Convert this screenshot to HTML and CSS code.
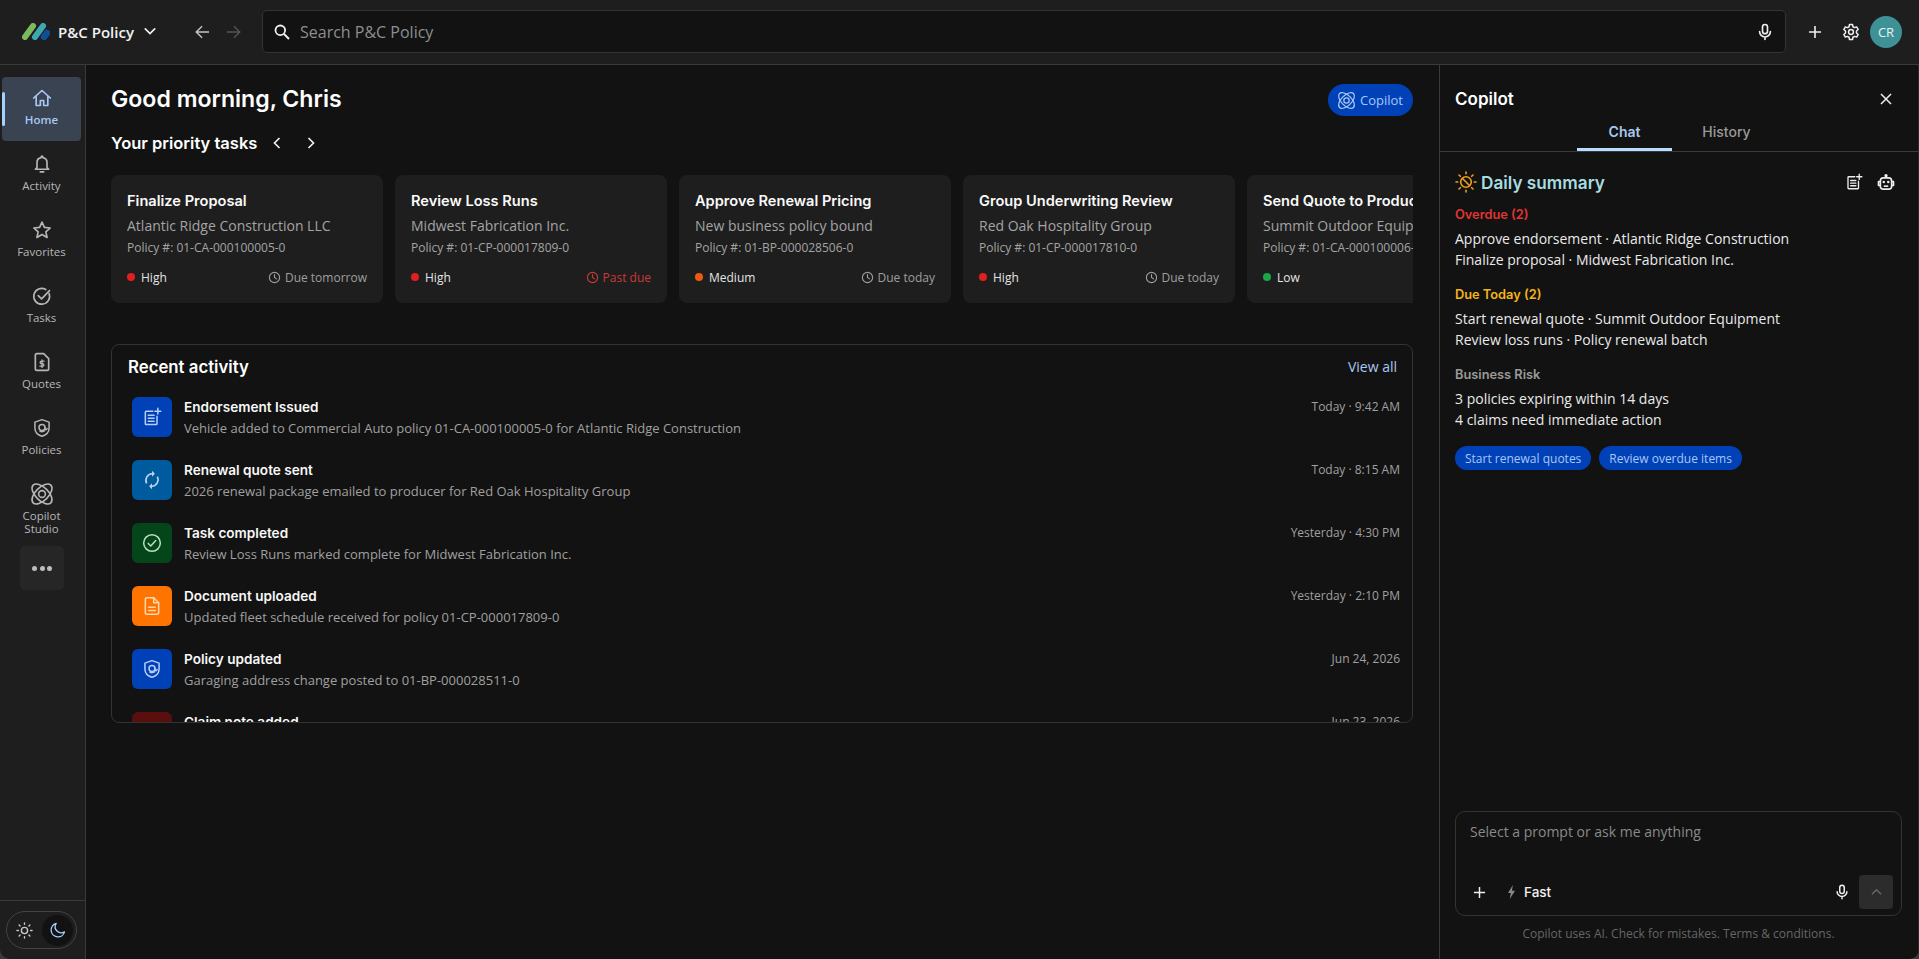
FILE: index.html
```html
<!DOCTYPE html>
<html lang="en">
<head>
<meta charset="utf-8">
<title>P&amp;C Policy</title>
<link rel="stylesheet" href="styles.css">
</head>
<body>
<svg class="defs" width="0" height="0" aria-hidden="true">
  <defs>
    <symbol id="i-atom" viewBox="0 0 24 24">
      <g fill="none" stroke="currentColor" stroke-width="1.6">
        <ellipse cx="12" cy="12" rx="12.5" ry="6.5" transform="rotate(45 12 12)"/>
        <ellipse cx="12" cy="12" rx="12.5" ry="6.5" transform="rotate(-45 12 12)"/>
        <circle cx="12" cy="12" r="3.4"/>
      </g>
    </symbol>
    <symbol id="i-clock" viewBox="0 0 14 14">
      <g fill="none" stroke="currentColor" stroke-width="1.2" stroke-linecap="round">
        <circle cx="7" cy="7" r="5.5"/>
        <path d="M7 3.8V7l2.2 1.5"/>
      </g>
    </symbol>
    <symbol id="i-mic" viewBox="0 0 24 24">
      <g fill="none" stroke="currentColor" stroke-width="2" stroke-linecap="round">
        <rect x="9" y="3" width="6" height="11" rx="3"/>
        <path d="M5.5 11.5a6.5 6.5 0 0 0 13 0M12 18v3"/>
      </g>
    </symbol>
    <symbol id="i-note" viewBox="0 0 24 24">
      <g fill="none" stroke="currentColor" stroke-width="1.8" stroke-linecap="round">
        <path d="M13 5H5a1 1 0 0 0-1 1v14a1 1 0 0 0 1 1h12a1 1 0 0 0 1-1v-9"/>
        <path d="M7.5 10h7M7.5 13.5h7M7.5 17h7M19 1.5v7M15.5 5h7"/>
      </g>
    </symbol>
    <symbol id="i-shield" viewBox="0 0 24 24">
      <g fill="none" stroke="currentColor" stroke-width="1.8" stroke-linecap="round" stroke-linejoin="round">
        <path d="M12 2l8.5 3v7c0 5-3.6 8.4-8.5 10-4.9-1.6-8.5-5-8.5-10V5z"/>
        <circle cx="12" cy="11.5" r="3.6"/>
        <path d="M15.6 11.5v1.2c0 1.8 2 1.8 2.4 0M15 15.5c-1.8 1-4 1-5.5.3"/>
      </g>
    </symbol>
  </defs>
</svg>
<div class="app">
  <header class="topbar">
    <svg class="logo" viewBox="0 0 28 17" aria-hidden="true">
      <path d="M22 14L25 10" stroke="#0f4f94" stroke-width="6.5" stroke-linecap="round"/>
      <path d="M3 14L11 3" stroke="#7cb95e" stroke-width="6" stroke-linecap="round"/>
      <path d="M13 14L21 3" stroke="#3fa7ad" stroke-width="6" stroke-linecap="round"/>
    </svg>
    <span class="app-name">P&amp;C Policy</span>
    <svg class="top-chev" viewBox="0 0 14 9" aria-hidden="true"><path d="M1.5 1.5L7 7l5.5-5.5" fill="none" stroke="currentColor" stroke-width="2" stroke-linecap="round"/></svg>
    <nav class="history">
      <svg class="nav-arrow" viewBox="0 0 16 16" aria-hidden="true"><path d="M15 8H1.5M7.5 1.8L1.3 8l6.2 6.2" fill="none" stroke="currentColor" stroke-width="1.5"/></svg>
      <svg class="nav-arrow off" viewBox="0 0 16 16" aria-hidden="true"><path d="M1 8h13.5M8.5 1.8L14.7 8l-6.2 6.2" fill="none" stroke="currentColor" stroke-width="1.5"/></svg>
    </nav>
    <div class="search">
      <svg class="search-icon" viewBox="0 0 16 16" aria-hidden="true"><circle cx="6.3" cy="6.3" r="4.8" fill="none" stroke="currentColor" stroke-width="1.8"/><path d="M10 10l5 5" stroke="currentColor" stroke-width="2"/></svg>
      <span class="search-text">Search P&amp;C Policy</span>
      <svg class="mic"><use href="#i-mic"/></svg>
    </div>
    <svg class="top-plus" viewBox="0 0 14 14" aria-hidden="true"><path d="M7 1v12M1 7h12" stroke="currentColor" stroke-width="1.6"/></svg>
    <svg class="top-gear" viewBox="0 0 24 24" aria-hidden="true">
      <g fill="none" stroke="currentColor" stroke-width="2" stroke-linejoin="round">
        <path d="M10 2h4l.6 3 2.1 1.2 2.9-1 2 3.5-2.3 2v2.6l2.3 2-2 3.5-2.9-1-2.1 1.2-.6 3h-4l-.6-3-2.1-1.2-2.9 1-2-3.5 2.3-2v-2.6l-2.3-2 2-3.5 2.9 1L9.4 5z"/>
        <circle cx="12" cy="12" r="3.2"/>
      </g>
    </svg>
    <div class="avatar">CR</div>
  </header>

  <div class="body">
    <aside class="sidebar">
      <nav class="side-nav">
        <a class="side-item active">
          <svg class="side-icon" viewBox="0 0 24 24" aria-hidden="true"><g fill="none" stroke="currentColor" stroke-width="2" stroke-linejoin="round" stroke-linecap="round"><path d="M2 12L12 3l10 9M5 10v11h5v-6h4v6h5V10"/></g></svg>
          <span>Home</span>
        </a>
        <a class="side-item">
          <svg class="side-icon" viewBox="0 0 24 24" aria-hidden="true"><g fill="none" stroke="currentColor" stroke-width="2" stroke-linejoin="round" stroke-linecap="round"><path d="M12 2.5a1 1 0 0 1 1 1v.8a6 6 0 0 1 5 6v6l2 2H4l2-2v-6a6 6 0 0 1 5-6v-.8a1 1 0 0 1 1-1z"/><path d="M10 21.5h4"/></g></svg>
          <span>Activity</span>
        </a>
        <a class="side-item">
          <svg class="side-icon" viewBox="0 0 24 24" aria-hidden="true"><path d="M12 2.5l2.9 6.4 6.9.7-5.2 4.6 1.5 6.8-6.1-3.5-6.1 3.5 1.5-6.8-5.2-4.6 6.9-.7z" fill="none" stroke="currentColor" stroke-width="2" stroke-linejoin="round"/></svg>
          <span>Favorites</span>
        </a>
        <a class="side-item">
          <svg class="side-icon" viewBox="0 0 24 24" aria-hidden="true"><g fill="none" stroke="currentColor" stroke-width="2" stroke-linecap="round" stroke-linejoin="round"><path d="M20.5 9a9.5 9.5 0 1 1-4-4.8"/><path d="M7.5 11.5l4 4L21 5.5"/></g></svg>
          <span>Tasks</span>
        </a>
        <a class="side-item">
          <svg class="side-icon" viewBox="0 0 24 24" aria-hidden="true"><g fill="none" stroke="currentColor" stroke-width="2" stroke-linejoin="round" stroke-linecap="round"><path d="M6 2h8l6 6v12a2 2 0 0 1-2 2H6a2 2 0 0 1-2-2V4a2 2 0 0 1 2-2z"/><path d="M14.5 11h-3.2a1.5 1.5 0 0 0 0 3h1.4a1.5 1.5 0 0 1 0 3H9.5M12 9.5v9" stroke-width="1.6"/></g></svg>
          <span>Quotes</span>
        </a>
        <a class="side-item">
          <svg class="side-icon"><use href="#i-shield"/></svg>
          <span>Policies</span>
        </a>
        <a class="side-item">
          <svg class="side-icon big"><use href="#i-atom"/></svg>
          <span>Copilot<br>Studio</span>
        </a>
        <button class="more" aria-label="More"><i></i><i></i><i></i></button>
      </nav>
      <div class="theme-area">
        <div class="theme-toggle">
          <svg class="sun" viewBox="0 0 18 18" aria-hidden="true"><g fill="none" stroke="currentColor" stroke-width="1.5" stroke-linecap="round"><circle cx="9" cy="9" r="3.3"/><path d="M9 1v1.5M9 15.5V17M1 9h1.5M15.5 9H17M3.3 3.3l1 1M13.7 13.7l1 1M3.3 14.7l1-1M13.7 4.3l1-1"/></g></svg>
          <span class="moon-wrap">
            <svg class="moon" viewBox="0 0 16 16" aria-hidden="true"><path d="M6.2 1.5a6.800 6.800 0 1 0 8.300 8.300A6 6 0 0 1 6.200 1.500z" fill="none" stroke="currentColor" stroke-width="1.3" stroke-linejoin="round"/></svg>
          </span>
        </div>
      </div>
    </aside>

    <main class="main">
      <div class="greet-row">
        <h1 class="greet">Good morning, Chris</h1>
        <button class="copilot-pill"><svg class="pill-icon"><use href="#i-atom"/></svg>Copilot</button>
      </div>
      <div class="tasks-head">
        <h2 class="tasks-title">Your priority tasks</h2>
        <svg class="task-nav" viewBox="0 0 8 12" aria-hidden="true"><path d="M6.5 1L1.5 6l5 5" fill="none" stroke="currentColor" stroke-width="1.7"/></svg>
        <svg class="task-nav" viewBox="0 0 8 12" aria-hidden="true"><path d="M1.5 1l5 5-5 5" fill="none" stroke="currentColor" stroke-width="1.7"/></svg>
      </div>
      <div class="cards">
        <article class="card">
          <h3 class="card-title">Finalize Proposal</h3>
          <p class="card-sub">Atlantic Ridge Construction LLC</p>
          <p class="card-policy">Policy #: 01-CA-000100005-0</p>
          <div class="card-foot"><span class="prio"><i class="dot red"></i>High</span><span class="due"><svg class="clock"><use href="#i-clock"/></svg>Due tomorrow</span></div>
        </article>
        <article class="card">
          <h3 class="card-title">Review Loss Runs</h3>
          <p class="card-sub">Midwest Fabrication Inc.</p>
          <p class="card-policy">Policy #: 01-CP-000017809-0</p>
          <div class="card-foot"><span class="prio"><i class="dot red"></i>High</span><span class="due late"><svg class="clock"><use href="#i-clock"/></svg>Past due</span></div>
        </article>
        <article class="card">
          <h3 class="card-title">Approve Renewal Pricing</h3>
          <p class="card-sub">New business policy bound</p>
          <p class="card-policy">Policy #: 01-BP-000028506-0</p>
          <div class="card-foot"><span class="prio"><i class="dot orange"></i>Medium</span><span class="due"><svg class="clock"><use href="#i-clock"/></svg>Due today</span></div>
        </article>
        <article class="card">
          <h3 class="card-title">Group Underwriting Review</h3>
          <p class="card-sub">Red Oak Hospitality Group</p>
          <p class="card-policy">Policy #: 01-CP-000017810-0</p>
          <div class="card-foot"><span class="prio"><i class="dot red"></i>High</span><span class="due"><svg class="clock"><use href="#i-clock"/></svg>Due today</span></div>
        </article>
        <article class="card">
          <h3 class="card-title">Send Quote to Producer</h3>
          <p class="card-sub">Summit Outdoor Equipment</p>
          <p class="card-policy">Policy #: 01-CA-000100006-0</p>
          <div class="card-foot"><span class="prio"><i class="dot green"></i>Low</span><span class="due"><svg class="clock"><use href="#i-clock"/></svg>Due today</span></div>
        </article>
      </div>

      <section class="activity">
        <div class="activity-head">
          <h2 class="activity-title">Recent activity</h2>
          <a class="view-all">View all</a>
        </div>
        <div class="activity-list">
          <div class="row">
            <span class="row-icon blue"><svg class="row-svg"><use href="#i-note"/></svg></span>
            <div class="row-text"><div class="row-title">Endorsement Issued</div><div class="row-sub">Vehicle added to Commercial Auto policy 01-CA-000100005-0 for Atlantic Ridge Construction</div></div>
            <span class="row-time">Today · 9:42 AM</span>
          </div>
          <div class="row">
            <span class="row-icon steel"><svg class="row-svg" viewBox="0 0 24 24" aria-hidden="true"><g fill="none" stroke="currentColor" stroke-width="2"><path d="M5.5 16A8 8 0 0 1 12 4.5h1"/><path d="M18.5 8A8 8 0 0 1 12 19.5h-1"/><path d="M12 1l3.5 3.5L12 8zM12 16l-3.5 3.5L12 23z" fill="currentColor" stroke="none"/></g></svg></span>
            <div class="row-text"><div class="row-title">Renewal quote sent</div><div class="row-sub">2026 renewal package emailed to producer for Red Oak Hospitality Group</div></div>
            <span class="row-time">Today · 8:15 AM</span>
          </div>
          <div class="row">
            <span class="row-icon forest"><svg class="row-svg" viewBox="0 0 24 24" aria-hidden="true"><g fill="none" stroke="currentColor" stroke-width="1.8" stroke-linecap="round" stroke-linejoin="round"><circle cx="12" cy="12" r="10"/><path d="M7.5 12.5l3 3 6-6.5"/></g></svg></span>
            <div class="row-text"><div class="row-title">Task completed</div><div class="row-sub">Review Loss Runs marked complete for Midwest Fabrication Inc.</div></div>
            <span class="row-time">Yesterday · 4:30 PM</span>
          </div>
          <div class="row">
            <span class="row-icon amber"><svg class="row-svg" viewBox="0 0 24 24" aria-hidden="true"><g fill="none" stroke="currentColor" stroke-width="1.8" stroke-linejoin="round" stroke-linecap="round"><path d="M6 2h8l6 6v12a2 2 0 0 1-2 2H6a2 2 0 0 1-2-2V4a2 2 0 0 1 2-2z"/><path d="M14 2v6h6M8 13.5h8M8 17.5h8"/></g></svg></span>
            <div class="row-text"><div class="row-title">Document uploaded</div><div class="row-sub">Updated fleet schedule received for policy 01-CP-000017809-0</div></div>
            <span class="row-time">Yesterday · 2:10 PM</span>
          </div>
          <div class="row">
            <span class="row-icon blue"><svg class="row-svg"><use href="#i-shield"/></svg></span>
            <div class="row-text"><div class="row-title">Policy updated</div><div class="row-sub">Garaging address change posted to 01-BP-000028511-0</div></div>
            <span class="row-time">Jun 24, 2026</span>
          </div>
          <div class="row">
            <span class="row-icon maroon"></span>
            <div class="row-text"><div class="row-title">Claim note added</div><div class="row-sub">Adjuster note added to claim file</div></div>
            <span class="row-time">Jun 23, 2026</span>
          </div>
        </div>
      </section>
    </main>

    <aside class="panel">
      <div class="panel-head">
        <h2 class="panel-title">Copilot</h2>
        <svg class="panel-close" viewBox="0 0 12 12" aria-hidden="true"><path d="M1 1l10 10M11 1L1 11" stroke="currentColor" stroke-width="1.5"/></svg>
      </div>
      <div class="tabs">
        <span class="tab current">Chat</span>
        <span class="tab">History</span>
      </div>
      <div class="summary">
        <div class="summary-head">
          <svg class="sum-icon" viewBox="0 0 22 22" aria-hidden="true"><g fill="none" stroke="#f0a020" stroke-width="1.6" stroke-linecap="round"><circle cx="11" cy="11" r="5.3"/><path d="M11 1v1.8M11 19.2V21M1 11h1.8M19.2 11H21M4 4l1.3 1.3M16.7 16.7L18 18M4 18l1.3-1.3M16.7 5.3L18 4M7.5 7.5l7 7"/></g></svg>
          <h3 class="sum-title">Daily summary</h3>
          <svg class="sum-action"><use href="#i-note"/></svg>
          <svg class="sum-action" viewBox="0 0 24 24" aria-hidden="true"><g fill="none" stroke="currentColor" stroke-width="2.2" stroke-linejoin="round"><rect x="4.5" y="6.5" width="15" height="15" rx="4"/><path d="M12 6.5V3"/><path d="M4 11.5H2v5h2M20 11.5h2v5h-2"/><path d="M9 17.5h6"/></g><circle cx="9" cy="12" r="1.7" fill="currentColor"/><circle cx="15" cy="12" r="1.7" fill="currentColor"/><circle cx="12" cy="3.5" r="2.2" fill="currentColor"/></svg>
        </div>
        <h4 class="sum-label overdue">Overdue (2)</h4>
        <p class="sum-line">Approve endorsement · Atlantic Ridge Construction</p>
        <p class="sum-line">Finalize proposal · Midwest Fabrication Inc.</p>
        <h4 class="sum-label today">Due Today (2)</h4>
        <p class="sum-line">Start renewal quote · Summit Outdoor Equipment</p>
        <p class="sum-line">Review loss runs · Policy renewal batch</p>
        <h4 class="sum-label risk">Business Risk</h4>
        <p class="sum-line">3 policies expiring within 14 days</p>
        <p class="sum-line">4 claims need immediate action</p>
        <div class="chips">
          <button class="chip">Start renewal quotes</button>
          <button class="chip">Review overdue items</button>
        </div>
      </div>
      <div class="composer">
        <div class="prompt">Select a prompt or ask me anything</div>
        <div class="composer-bar">
          <svg class="comp-plus" viewBox="0 0 14 14" aria-hidden="true"><path d="M7 1v12M1 7h12" stroke="currentColor" stroke-width="1.6"/></svg>
          <svg class="bolt" viewBox="0 0 10 16" aria-hidden="true"><path d="M6.5 0L1 9h3.2L3 16l6-9.5H5.6z" fill="currentColor"/></svg>
          <span class="fast">Fast</span>
          <svg class="comp-mic"><use href="#i-mic"/></svg>
          <button class="send" aria-label="Send"><svg class="send-icon" viewBox="0 0 12 8" aria-hidden="true"><path d="M1 6.5l5-5 5 5" fill="none" stroke="currentColor" stroke-width="1.5"/></svg></button>
        </div>
      </div>
      <p class="disclaimer">Copilot uses AI. Check for mistakes. Terms &amp; conditions.</p>
    </aside>
  </div>
</div>
</body>
</html>
```
FILE: styles.css
```css
* { box-sizing: border-box; }
html, body { height: 100%; margin: 0; }
body { background: #3a3a3a; font-family: "Open Sans", sans-serif; color: #fff; overflow: hidden; }
h1, h2, h3, h4, p { margin: 0; }
button { font: inherit; border: 0; padding: 0; color: inherit; }
.defs { position: absolute; }
.app { height: 959px; display: flex; flex-direction: column; background: #1e1e1e; border-radius: 0 0 10px 10px; overflow: hidden; }

.topbar { height: 65px; flex: none; display: flex; align-items: center; padding: 0 12px 1px 22px; border-bottom: 1px solid #3a3a3a; }
.logo { width: 28px; height: 17px; flex: none; }
.app-name { width: 77px; margin-left: 8px; font-size: 15px; font-weight: 600; color: #f2f2f2; white-space: nowrap; flex: none; }
.top-chev { width: 12px; height: 9px; margin-left: 9px; color: #eee; flex: none; }
.history { display: flex; gap: 16px; margin-left: 39px; flex: none; }
.nav-arrow { width: 15px; height: 16px; color: #c4c4c4; }
.nav-arrow.off { color: #555; }
.search { width: 1524px; height: 43px; margin-left: 21px; background: #121212; border: 1px solid #333; border-radius: 5px; display: flex; align-items: center; padding: 0 10px 0 11px; flex: none; }
.search-icon { width: 16px; height: 16px; color: #f0f0f0; flex: none; }
.search-text { margin-left: 10px; font-size: 16px; color: #8e8e8e; flex: 1; }
.mic { width: 20px; height: 20px; color: #eee; }
.top-plus { width: 14px; height: 14px; margin-left: 22px; color: #eee; flex: none; }
.top-gear { width: 18px; height: 18px; margin-left: 20px; color: #eee; flex: none; }
.avatar { width: 32px; height: 32px; margin-left: 10px; border-radius: 50%; background: #3f9198; color: #e8f4f5; font-size: 13px; font-weight: 500; display: flex; align-items: center; justify-content: center; flex: none; }

.body { flex: 1; min-height: 0; display: flex; }
.sidebar { width: 86px; flex: none; border-right: 1px solid #3a3a3a; display: flex; flex-direction: column; }
.side-nav { flex: 1; padding: 12px 0 0 2px; display: flex; flex-direction: column; align-items: flex-start; gap: 2px; }
.side-item { position: relative; width: 79px; height: 64px; display: flex; flex-direction: column; align-items: center; padding-top: 11px; border-radius: 4px; color: #b6b6b6; font-size: 11.5px; line-height: 13px; text-align: center; }
.side-item span { margin-top: 5px; }
.side-item.active { background: #3a4352; color: #a8c8f0; font-weight: 600; }
.side-item.active::before { content: ""; position: absolute; left: 0; top: 15px; width: 3px; height: 34px; background: #a8d0ff; border-radius: 2px; }
.side-icon { width: 20px; height: 20px; flex: none; }
.side-icon.big { width: 24px; height: 24px; margin: -2px 0; }
.more { width: 44px; height: 44px; margin: 7px 0 0 18px; background: #262626; border-radius: 5px; display: flex; align-items: center; justify-content: center; gap: 2.5px; }
.more i { width: 5px; height: 5px; border-radius: 50%; background: #bdbdbd; }
.theme-area { height: 59px; flex: none; border-top: 1px solid #3a3a3a; padding: 10px 0 0 6px; }
.theme-toggle { width: 71px; height: 38px; border: 1px solid #444; border-radius: 19px; display: flex; align-items: center; justify-content: space-between; padding: 0 3px 0 9px; }
.sun { width: 17px; height: 17px; color: #c8c8c8; }
.moon-wrap { width: 31px; height: 31px; border-radius: 50%; background: #121212; display: flex; align-items: center; justify-content: center; }
.moon { width: 16px; height: 16px; color: #a8d0ff; }

.main { flex: 1; min-width: 0; background: #121212; padding: 19px 26px 0 25px; }
.greet-row { display: flex; align-items: center; justify-content: space-between; height: 32px; }
.greet { font-family: Inter, sans-serif; font-size: 23.1px; font-weight: 600; color: #fff; padding-bottom: 2px; }
.copilot-pill { width: 85px; height: 32px; border-radius: 16px; background: #0041b8; color: #a8c8f5; font-size: 13px; display: flex; align-items: center; gap: 4px; padding-left: 9px; }
.pill-icon { width: 19px; height: 19px; flex: none; }
.tasks-head { display: flex; align-items: center; height: 24px; margin-top: 15px; }
.tasks-title { font-family: Inter, sans-serif; font-size: 16.5px; font-weight: 600; }
.task-nav { width: 8px; height: 12px; color: #eee; margin-left: 16px; }
.task-nav + .task-nav { margin-left: 26px; }
.cards { display: flex; gap: 12px; margin-top: 20px; overflow: hidden; }
.card { width: 272px; height: 128px; flex: none; background: #1e1e1e; border-radius: 8px; padding: 16px 16px 0; }
.card-title { font-family: Inter, sans-serif; font-size: 14.6px; font-weight: 600; line-height: 21px; color: #fafafa; white-space: nowrap; }
.card-sub { margin-top: 4px; font-size: 14px; line-height: 20px; color: #a4a4a4; white-space: nowrap; }
.card-policy { margin-top: 2px; font-size: 12px; line-height: 20px; color: #a4a4a4; white-space: nowrap; }
.card-foot { display: flex; justify-content: space-between; align-items: center; margin-top: 10px; height: 18px; font-size: 12px; }
.prio { display: flex; align-items: center; gap: 6px; color: #e4e4e4; }
.dot { width: 8px; height: 8px; border-radius: 50%; flex: none; }
.dot.red { background: #e02020; }
.dot.orange { background: #f05a10; }
.dot.green { background: #18a848; }
.due { display: flex; align-items: center; gap: 4px; color: #9e9e9e; }
.due.late { color: #c83a3a; }
.clock { width: 13px; height: 13px; }

.activity { margin-top: 41px; height: 379px; border: 1px solid #333; border-radius: 8px; overflow: hidden; padding: 0 0 0 16px; }
.activity-head { height: 41px; display: flex; justify-content: space-between; align-items: center; padding: 2px 15px 0 0; }
.activity-title { font-family: Inter, sans-serif; font-size: 16.8px; font-weight: 600; }
.view-all { font-size: 14px; color: #a8c8f5; }
.activity-list { padding: 11px 12px 0 4px; }
.row { height: 63px; display: flex; align-items: flex-start; }
.row-icon { width: 40px; height: 40px; flex: none; border-radius: 6px; display: flex; align-items: center; justify-content: center; color: #dfe8ff; }
.row-icon.blue { background: #0041b8; color: #b8cdf8; }
.row-icon.steel { background: #005a9e; color: #b8d4f0; }
.row-icon.forest { background: #04451a; color: #b8e0c0; }
.row-icon.amber { background: #ff7300; color: #ffd8b0; }
.row-icon.maroon { background: #5a0f0f; }
.row-svg { width: 20px; height: 20px; }
.row-text { margin-left: 12px; flex: 1; }
.row-title { font-family: Inter, sans-serif; font-size: 13.6px; font-weight: 600; line-height: 20px; color: #f8f8f8; }
.row-sub { font-size: 13px; line-height: 18px; margin-top: 2px; color: #a0a0a0; }
.row-time { font-size: 12px; line-height: 20px; color: #a0a0a0; }

.panel { width: 480px; flex: none; background: #121212; border-left: 1px solid #3a3a3a; border-right: 1px solid #2a2a2a; display: flex; flex-direction: column; padding: 0 16px 0 15px; }
.panel-head { height: 46px; flex: none; display: flex; justify-content: space-between; align-items: center; padding: 2px 4px 0 0; margin-top: 10px; }
.panel-title { font-family: Inter, sans-serif; font-size: 17px; font-weight: 600; }
.panel-close { width: 12px; height: 12px; color: #eee; margin-right: 6px; }
.tabs { height: 31px; flex: none; margin: 0 -16px 0 -15px; display: flex; justify-content: flex-start; padding-left: 137px; border-bottom: 1px solid #3a3a3a; }
.tab { width: 95px; margin-right: 7px; text-align: center; font-family: Inter, sans-serif; font-size: 14px; font-weight: 500; line-height: 22px; color: #999; }
.tab.current { color: #a8c8f0; font-weight: 600; box-shadow: inset 0 -3px 0 #bcdcff; }
.summary { flex: 1; padding-top: 18px; }
.summary-head { display: flex; align-items: center; height: 24px; margin-bottom: 11px; padding-right: 7px; }
.sum-icon { width: 22px; height: 22px; flex: none; }
.sum-title { flex: 1; margin-left: 4px; font-family: Inter, sans-serif; font-size: 17.2px; font-weight: 600; color: #a8dce0; }
.sum-action { width: 18px; height: 18px; color: #eee; margin-left: 14px; flex: none; }
.sum-label { font-family: Inter, sans-serif; font-size: 12.8px; font-weight: 600; line-height: 20px; margin-bottom: 3px; }
.sum-label.overdue { color: #e03535; }
.sum-label.today { color: #f4b41a; margin-top: 15px; }
.sum-label.risk { color: #9a9a9a; margin-top: 15px; }
.sum-line { font-size: 14px; line-height: 21px; color: #eaeaea; }
.chips { display: flex; gap: 8px; margin-top: 16px; }
.chip { height: 24px; padding: 0 10px; border-radius: 12px; background: #0041b8; color: #a8c8f5; font-size: 12px; }
.composer { height: 105px; flex: none; border: 1px solid #333; border-radius: 10px; padding: 10px 8px 6px 14px; display: flex; flex-direction: column; justify-content: space-between; }
.prompt { font-size: 14px; line-height: 20px; color: #8a8a8a; }
.composer-bar { display: flex; align-items: center; }
.comp-plus { width: 13px; height: 13px; color: #eee; margin-left: 3px; }
.bolt { width: 9px; height: 14px; color: #888; margin-left: 21px; }
.fast { flex: 1; margin-left: 8px; font-family: Inter, sans-serif; font-size: 13.5px; font-weight: 500; color: #f2f2f2; }
.comp-mic { width: 18px; height: 18px; color: #eee; margin-right: 8px; }
.send { width: 34px; height: 34px; border-radius: 4px; background: #2c2c2c; color: #666; display: flex; align-items: center; justify-content: center; }
.send-icon { width: 11px; height: 8px; }
.disclaimer { height: 43px; flex: none; padding-top: 9px; text-align: center; font-size: 12px; color: #666; }
```
